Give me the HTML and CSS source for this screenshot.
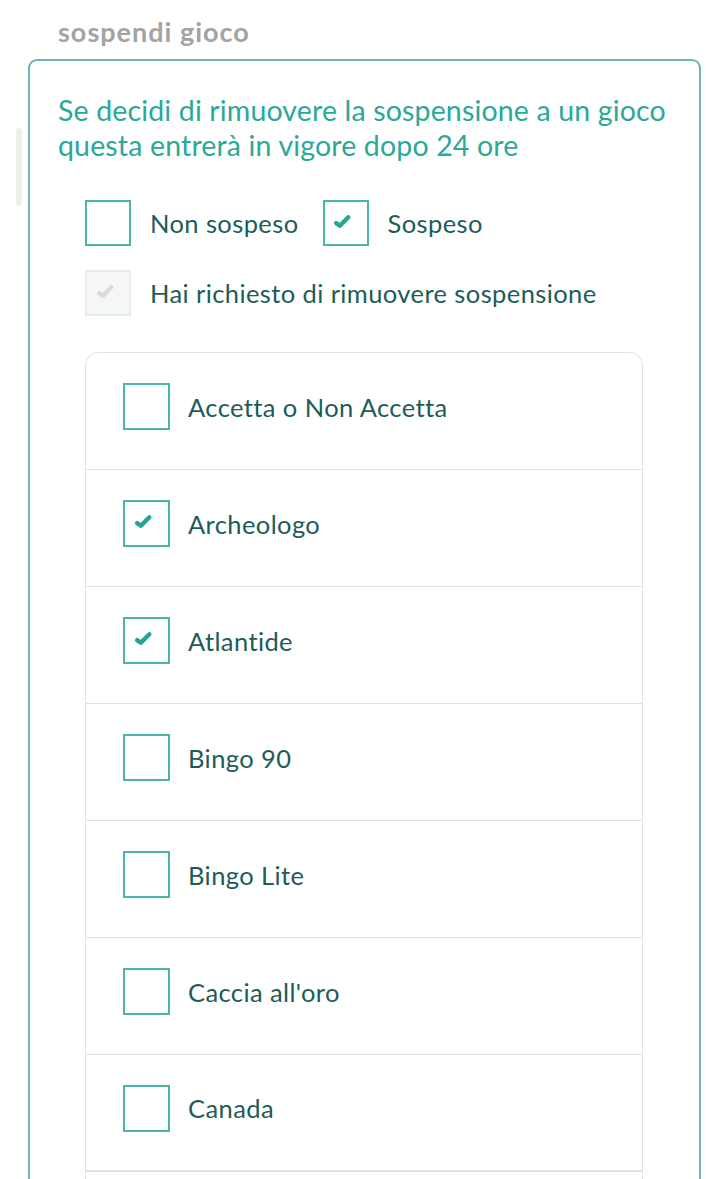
FILE: index.html
```html
<!DOCTYPE html>
<html lang="it">
<head>
<meta charset="utf-8">
<link rel="stylesheet" href="styles.css">
</head>
<body>
<div class="scrollbar"></div>
<h2 class="title">sospendi gioco</h2>
<section class="card">
  <p class="intro">Se decidi di rimuovere la sospensione a un gioco questa entrerà in vigore dopo 24 ore</p>
  <div class="options">
    <div class="opt-row">
      <label class="opt"><span class="box"></span><span class="lbl">Non sospeso</span></label>
      <label class="opt"><span class="box"><svg class="chk" viewBox="0 0 18 14"><path d="M3 8.5 L6.5 11 L14.5 3"/></svg></span><span class="lbl">Sospeso</span></label>
    </div>
    <div class="opt-row">
      <label class="opt"><span class="box disabled"><svg class="chk" viewBox="0 0 18 14"><path d="M3 8.5 L6.5 11 L14.5 3"/></svg></span><span class="lbl">Hai richiesto di rimuovere sospensione</span></label>
    </div>
  </div>
  <ul class="list">
    <li class="item"><span class="box"></span><span class="lbl">Accetta o Non Accetta</span></li>
    <li class="item"><span class="box"><svg class="chk" viewBox="0 0 18 14"><path d="M3 8.5 L6.5 11 L14.5 3"/></svg></span><span class="lbl">Archeologo</span></li>
    <li class="item"><span class="box"><svg class="chk" viewBox="0 0 18 14"><path d="M3 8.5 L6.5 11 L14.5 3"/></svg></span><span class="lbl">Atlantide</span></li>
    <li class="item"><span class="box"></span><span class="lbl">Bingo 90</span></li>
    <li class="item"><span class="box"></span><span class="lbl">Bingo Lite</span></li>
    <li class="item"><span class="box"></span><span class="lbl">Caccia all'oro</span></li>
    <li class="item"><span class="box"></span><span class="lbl">Canada</span></li>
  </ul>
</section>
</body>
</html>
```
FILE: styles.css
```css
html, body {
  margin: 0;
  padding: 0;
  background: #ffffff;
  overflow: hidden;
}
body {
  font-family: Lato, "Open Sans", sans-serif;
  height: 1179px;
  position: relative;
}
.scrollbar {
  position: absolute;
  left: 16px;
  top: 128px;
  width: 6px;
  height: 78px;
  background: #eeeeee;
  border-radius: 3px;
}
.title {
  margin: 0;
  padding: 14px 0 0 58px;
  height: 59px;
  box-sizing: border-box;
  font-size: 27px;
  font-weight: 700;
  letter-spacing: 1px;
  color: #a3a3a3;
  line-height: 36px;
}
.card {
  margin: 0 27px 0 28px;
  border: 2px solid #69b9ae;
  border-bottom: none;
  border-radius: 9px 9px 0 0;
  padding: 32px 0 0 0;
  height: 1118px;
  overflow: hidden;
}
.intro {
  margin: 0 0 0 28px;
  padding-right: 10px;
  font-size: 28.5px;
  letter-spacing: 0.15px;
  line-height: 35px;
  color: #2aa898;
}
.options {
  margin: 37px 0 0 55px;
  display: flex;
  flex-direction: column;
  gap: 24px;
}
.opt-row {
  display: flex;
  gap: 24px;
}
.opt {
  display: flex;
  align-items: center;
  gap: 19px;
}
.box {
  width: 46px;
  height: 46px;
  box-sizing: border-box;
  border: 2px solid #48b7a6;
  background: #fff;
  display: flex;
  align-items: center;
  justify-content: center;
  flex: none;
}
.box.disabled {
  border-color: #e4eced;
  background: #f5f7f7;
}
.chk {
  width: 19px;
  height: 15px;
  margin: -4px 6px 0 0;
  fill: none;
  stroke: #26a492;
  stroke-width: 4.2;
  stroke-linecap: round;
  stroke-linejoin: round;
}
.box.disabled .chk {
  stroke: #dadada;
}
.lbl {
  font-size: 25.5px;
  letter-spacing: 0.4px;
  color: #1d5c58;
  line-height: 30px;
}
.list {
  list-style: none;
  margin: 36px 56px 0 55px;
  padding: 0 0 40px 0;
  border: 1px solid #e2e2e2;
  border-bottom: none;
  border-radius: 14px 14px 0 0;
}
.item {
  display: flex;
  align-items: center;
  gap: 18px;
  height: 117px;
  box-sizing: border-box;
  padding: 0 0 9px 37px;
  border-bottom: 1px solid #e2e2e2;
}
.item:last-child {
  border-bottom: 2px solid #e2e2e2;
}
.item .box {
  width: 47px;
  height: 47px;
}
```
